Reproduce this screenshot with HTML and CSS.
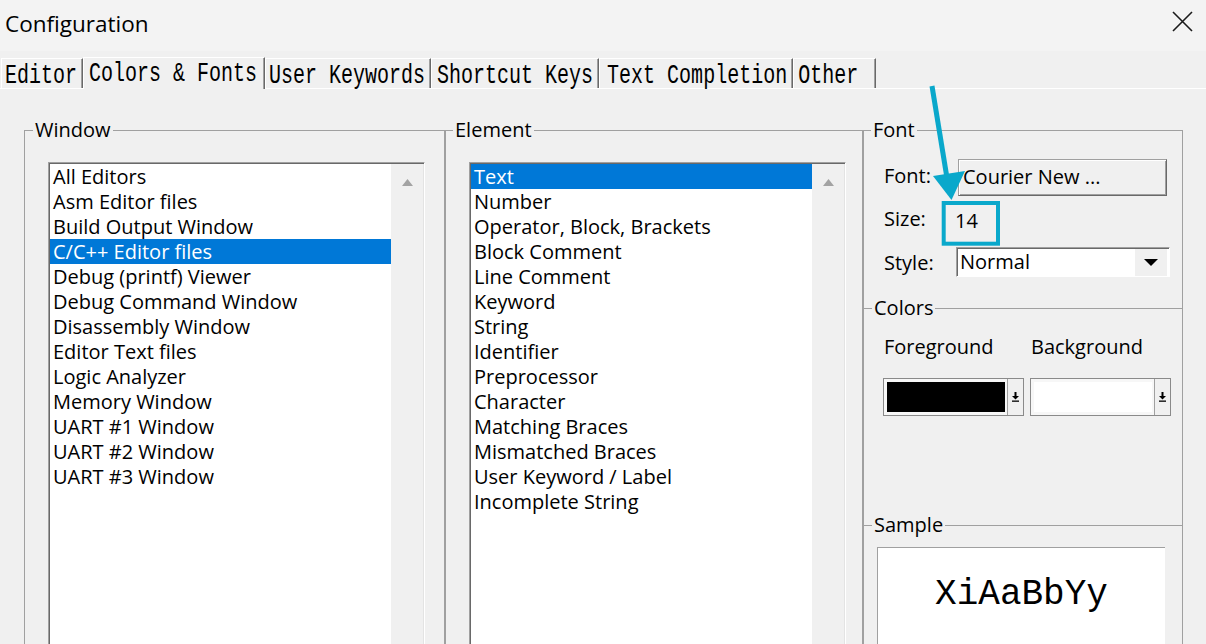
FILE: index.html
```html
<!DOCTYPE html>
<html>
<head>
<meta charset="utf-8">
<title>Configuration</title>
<link rel="stylesheet" href="styles.css">
</head>
<body>
<div class="titlebar">
  <span class="title">Configuration</span>
  <svg class="close" width="21" height="21" viewBox="0 0 21 21"><path d="M1 1 L20 20 M20 1 L1 20" stroke="#1a1a1a" stroke-width="1.6" fill="none"/></svg>
</div>
<div class="tabbar">
  <div class="tab t-editor"><span class="tl">Editor</span></div>
  <div class="tab t-colors sel"><span class="tl">Colors &amp; Fonts</span></div>
  <div class="tab t-user"><span class="tl">User Keywords</span></div>
  <div class="tab t-short"><span class="tl">Shortcut Keys</span></div>
  <div class="tab t-text"><span class="tl">Text Completion</span></div>
  <div class="tab t-other"><span class="tl">Other</span></div>
</div>
<div class="panel">
  <fieldset class="group g-window">
    <legend>Window</legend>
    <div class="listbox">
      <ul class="items">
        <li>All Editors</li>
        <li>Asm Editor files</li>
        <li>Build Output Window</li>
        <li class="sel">C/C++ Editor files</li>
        <li>Debug (printf) Viewer</li>
        <li>Debug Command Window</li>
        <li>Disassembly Window</li>
        <li>Editor Text files</li>
        <li>Logic Analyzer</li>
        <li>Memory Window</li>
        <li>UART #1 Window</li>
        <li>UART #2 Window</li>
        <li>UART #3 Window</li>
      </ul>
      <div class="vscroll"><svg width="11" height="7" viewBox="0 0 11 7"><polygon points="5.5,0 11,7 0,7" fill="#a3a3a3"/></svg></div>
    </div>
  </fieldset>
  <fieldset class="group g-element">
    <legend>Element</legend>
    <div class="listbox">
      <ul class="items">
        <li class="sel">Text</li>
        <li>Number</li>
        <li>Operator, Block, Brackets</li>
        <li>Block Comment</li>
        <li>Line Comment</li>
        <li>Keyword</li>
        <li>String</li>
        <li>Identifier</li>
        <li>Preprocessor</li>
        <li>Character</li>
        <li>Matching Braces</li>
        <li>Mismatched Braces</li>
        <li>User Keyword / Label</li>
        <li>Incomplete String</li>
      </ul>
      <div class="vscroll"><svg width="11" height="7" viewBox="0 0 11 7"><polygon points="5.5,0 11,7 0,7" fill="#a3a3a3"/></svg></div>
    </div>
  </fieldset>
  <fieldset class="group g-font">
    <legend>Font</legend>
    <div class="font-grid">
      <span class="lbl l-font">Font:</span>
      <div class="btn">Courier New ...</div>
      <span class="lbl l-size">Size:</span>
      <span class="size-val">14</span>
      <span class="lbl l-style">Style:</span>
      <div class="combo">
        <span class="combo-text">Normal</span>
        <div class="combo-btn"><svg width="14" height="7" viewBox="0 0 14 7"><polygon points="0,0 14,0 7,7" fill="#000"/></svg></div>
      </div>
    </div>
    <div class="sec-head"><span>Colors</span></div>
    <div class="colors">
      <span class="clbl">Foreground</span>
      <span class="clbl">Background</span>
      <div class="swatch">
        <div class="swatch-fill fg"></div>
        <div class="swatch-drop"><svg width="7" height="10" viewBox="0 0 7 10"><rect x="2.5" y="0" width="2" height="4" fill="#000"/><polygon points="0,4 7,4 3.5,7.5" fill="#000"/><rect x="0" y="8.5" width="7" height="1.3" fill="#000"/></svg></div>
      </div>
      <div class="swatch">
        <div class="swatch-fill bg"></div>
        <div class="swatch-drop"><svg width="7" height="10" viewBox="0 0 7 10"><rect x="2.5" y="0" width="2" height="4" fill="#000"/><polygon points="0,4 7,4 3.5,7.5" fill="#000"/><rect x="0" y="8.5" width="7" height="1.3" fill="#000"/></svg></div>
      </div>
    </div>
    <div class="sec-head sample-head"><span>Sample</span></div>
    <div class="sample"><span class="sample-text">XiAaBbYy</span></div>
  </fieldset>
</div>
<svg class="annot" width="1206" height="644" viewBox="0 0 1206 644">
  <line x1="932" y1="86" x2="947" y2="178" stroke="#0aa8cb" stroke-width="5"/>
  <polygon points="933,176 965,171 951.5,200" fill="#0aa8cb"/>
  <rect x="943.7" y="203" width="54.3" height="40.7" fill="none" stroke="#0aa8cb" stroke-width="4"/>
</svg>
</body>
</html>
```

FILE: styles.css
```css
html, body {
  margin: 0;
  padding: 0;
}
body {
  width: 1206px;
  height: 644px;
  overflow: hidden;
  position: relative;
  background: #f0f0f0;
  color: #000;
  font-family: "Open Sans", "Liberation Sans", sans-serif;
}

/* Title bar */
.titlebar {
  height: 51px;
  background: #f3f3f3;
  display: flex;
  justify-content: space-between;
  align-items: flex-start;
}
.title {
  font-size: 22.5px;
  line-height: 30px;
  margin: 9px 0 0 5px;
}
.close {
  margin: 11px 13px 0 0;
}

/* Tabs */
.tabbar {
  height: 37px;
  display: flex;
  align-items: flex-end;
  padding-left: 1px;
  border-bottom: 1px solid #fff;
}
.tab {
  height: 30px;
  box-sizing: border-box;
  border-top: 1px solid #fff;
  border-left: 1px solid #fff;
  border-right: 1px solid #696969;
  box-shadow: inset -1px 0 0 #a0a0a0;
  padding-top: 7px;
  background: #f0f0f0;
}
.tab.sel {
  height: 32px;
  margin-bottom: -1px;
  padding-top: 6px;
  position: relative;
  z-index: 1;
}
.tl {
  display: block;
  font-family: "Liberation Mono", monospace;
  font-size: 20px;
  line-height: 20px;
  white-space: pre;
  transform: scaleY(1.4);
}
.t-editor { padding-left: 3px; padding-right: 5px; }
.t-colors { padding-left: 5px; padding-right: 7px; }
.t-user { padding-left: 3px; padding-right: 5px; }
.t-short { padding-left: 5px; padding-right: 5px; }
.t-text { padding-left: 7px; padding-right: 5px; }
.t-other { padding-left: 4px; padding-right: 17px; }

/* Panel */
.panel {
  display: flex;
  align-items: flex-start;
  padding: 29px 0 0 24px;
}
.group {
  margin: 0;
  padding: 0;
  min-width: 0;
  height: 600px;
  box-sizing: border-box;
  border: 1px solid #a0a0a0;
}
.group legend {
  font-size: 20px;
  line-height: 24px;
  padding: 0 2px;
  margin-left: 8px;
}
.g-window { width: 421px; }
.g-element { width: 418px; }
.g-font { width: 320px; }
.g-element legend, .g-font legend { margin-left: 7px; }

/* List boxes */
.listbox {
  display: flex;
  margin: 20px 0 0 23px;
  width: 377px;
  height: 500px;
  box-sizing: border-box;
  border: 1px solid;
  border-color: #a0a0a0 #fff #fff #a0a0a0;
  padding: 1px;
  box-shadow: inset 1px 1px 0 #696969, inset -1px -1px 0 #e3e3e3;
  background: #f0f0f0;
}
.items {
  list-style: none;
  margin: 0;
  padding: 0;
  width: 341px;
  background: #fff;
}
.items li {
  height: 25px;
  line-height: 25px;
  padding-left: 3px;
  font-size: 20px;
  white-space: nowrap;
}
.items li.sel {
  background: #0078d7;
  color: #fff;
}
.vscroll {
  flex: 1;
  display: flex;
  justify-content: center;
  align-items: flex-start;
  padding-top: 15px;
}

/* Font group */
.font-grid {
  display: grid;
  grid-template-columns: 72px 1fr;
  grid-template-rows: 37px 51px 30px;
  align-items: start;
  padding: 17px 0 0 20px;
  font-size: 20px;
}
.lbl, .size-val {
  line-height: 24px;
}
.l-font { margin-top: 5px; }
.l-size { margin-top: 11px; }
.l-style { margin-top: 4px; }
.size-val {
  margin: 13px 0 0 -1px;
}
.btn {
  margin-left: 2px;
  width: 209px;
  height: 37px;
  box-sizing: border-box;
  border: 1px solid #a0a0a0;
  border-right-color: #696969;
  border-bottom-color: #696969;
  box-shadow: inset 1px 1px 0 #fff, inset -1px -1px 0 #a0a0a0;
  background: #f0f0f0;
  line-height: 33px;
  padding-left: 4px;
}
.combo {
  width: 214px;
  height: 30px;
  box-sizing: border-box;
  display: flex;
  border: 1px solid;
  border-color: #a0a0a0 #fff #fff #a0a0a0;
  box-shadow: inset 1px 1px 0 #696969;
  padding: 1px 2px 0 1px;
  background: #fff;
}
.combo-text {
  flex: 1;
  line-height: 26px;
  padding-left: 2px;
}
.combo-btn {
  width: 32px;
  background: #f0f0f0;
  border-left: 1px solid #fff;
  display: flex;
  align-items: center;
  justify-content: center;
}

/* Section heads */
.sec-head {
  display: flex;
  align-items: center;
  height: 24px;
  margin-top: 19px;
  font-size: 20px;
  line-height: 24px;
}
.sec-head::before {
  content: "";
  width: 8px;
  border-top: 1px solid #a0a0a0;
}
.sec-head::after {
  content: "";
  flex: 1;
  border-top: 1px solid #a0a0a0;
}
.sec-head span {
  padding: 0 2px;
}

/* Colors */
.colors {
  display: grid;
  grid-template-columns: 141px 141px;
  column-gap: 6px;
  padding-left: 19px;
  margin-top: 15px;
  font-size: 20px;
}
.clbl {
  line-height: 24px;
  padding-left: 1px;
  margin-bottom: 19px;
}
.swatch {
  display: flex;
  height: 38px;
  box-sizing: border-box;
  border: 1px solid #8a8a8a;
  background: #f7f7f7;
}
.swatch-fill {
  flex: 1;
  margin: 3px 2px 3px 3px;
}
.swatch-fill.fg { background: #000; }
.swatch-fill.bg { background: #fff; }
.swatch-drop {
  width: 15px;
  border-left: 1px solid #a0a0a0;
  background: #f0f0f0;
  display: flex;
  align-items: center;
  justify-content: center;
}

/* Sample */
.sample-head {
  margin-top: 97px;
}
.sample {
  margin: 10px 0 0 13px;
  width: 288px;
  height: 140px;
  box-sizing: border-box;
  border-top: 1px solid #a0a0a0;
  border-left: 1px solid #a0a0a0;
  background: #fff;
  text-align: center;
  padding-top: 27px;
}
.sample-text {
  font-family: "Liberation Mono", monospace;
  font-size: 36px;
  line-height: 40px;
}

/* Annotation overlay */
.annot {
  position: absolute;
  left: 0;
  top: 0;
  pointer-events: none;
}
```
